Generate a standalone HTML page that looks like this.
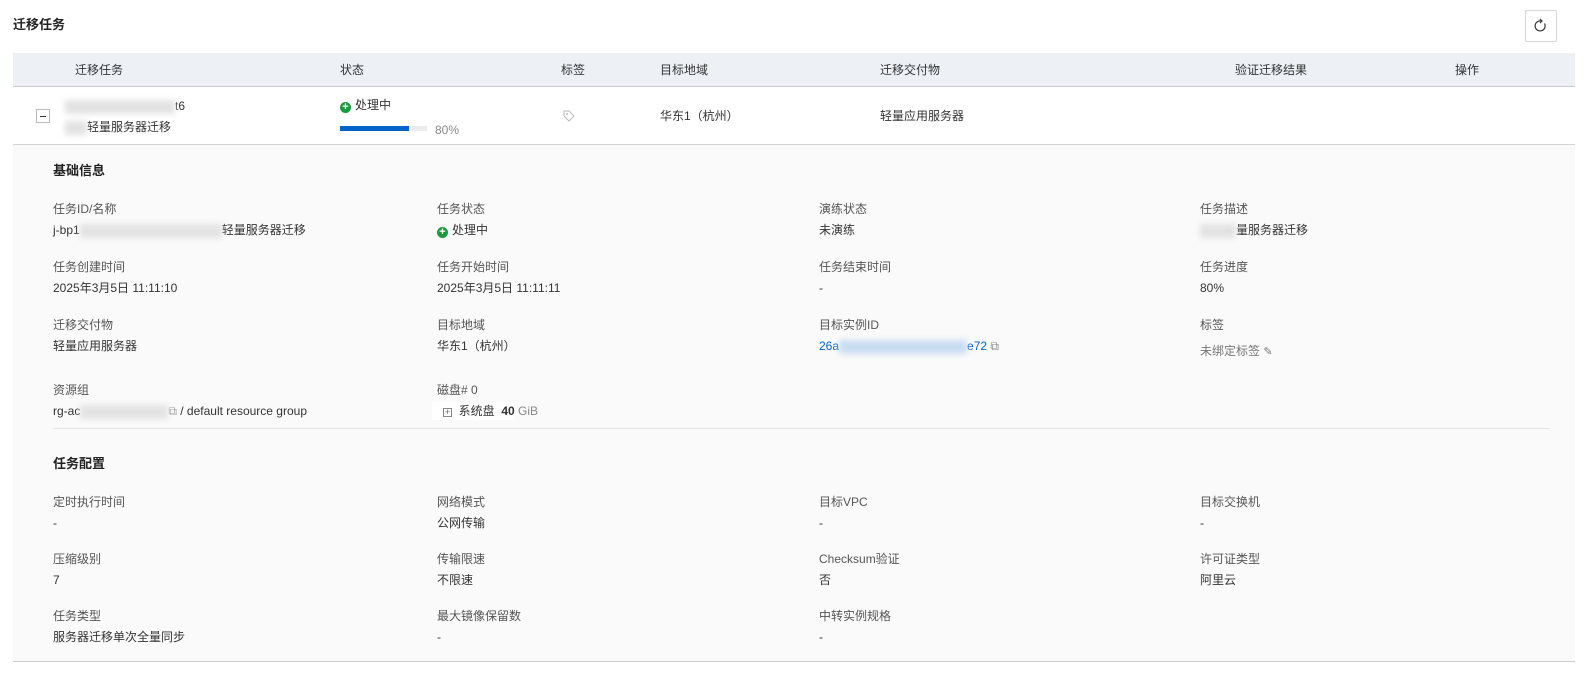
<!DOCTYPE html>
<html><head><meta charset="utf-8"><style>
*{margin:0;padding:0;box-sizing:border-box}
body{width:1587px;height:673px;background:#fff;font-family:"Liberation Sans","Noto Sans CJK SC",sans-serif;font-size:12px;color:#333;position:relative;overflow:hidden}
.a{position:absolute;white-space:nowrap;line-height:16px}
.l{color:#555}
.v{color:#333}
.blur{display:inline-block;background:#e2e2e2;filter:blur(3px);vertical-align:middle;height:14px}
.bblur{display:inline-block;background:#c9ddf2;filter:blur(3px);vertical-align:middle;height:14px}
.h{font-weight:bold;font-size:13px;color:#222}
.dot{display:inline-block;width:11px;height:11px;border-radius:50%;background:#1a9a3c;color:#fff;font-size:11px;line-height:11px;text-align:center;font-weight:bold;vertical-align:-1px;margin-right:4px}
</style></head><body>
<div class="a h" style="left:13px;top:17px;font-size:13px">迁移任务</div>
<div class="a" style="left:1525px;top:10px;width:32px;height:32px;border:1px solid #d5d5d5;border-radius:2px;background:#fff">
<svg width="30" height="30" viewBox="0 0 30 30"><path d="M18.5 12.5 A5 5 0 1 1 15 10" fill="none" stroke="#333" stroke-width="1.2"/><path d="M14 8 L16 10 L14 12" fill="none" stroke="#333" stroke-width="1.2"/></svg></div>
<div class="a" style="left:13px;top:53px;width:1562px;height:34px;background:#edf1f6;border-bottom:1px solid #ccc"></div>
<div class="a" style="left:75px;top:62px">迁移任务</div>
<div class="a" style="left:340px;top:62px">状态</div>
<div class="a" style="left:561px;top:62px">标签</div>
<div class="a" style="left:660px;top:62px">目标地域</div>
<div class="a" style="left:880px;top:62px">迁移交付物</div>
<div class="a" style="left:1235px;top:62px">验证迁移结果</div>
<div class="a" style="left:1455px;top:62px">操作</div>
<!-- row -->
<div class="a" style="left:36px;top:109px;width:14px;height:14px;border:1px solid #bbb;background:#fff"><div style="position:absolute;left:3px;top:6px;width:6px;height:1px;background:#333"></div></div>
<div class="a" style="left:65px;top:98px"><span class="blur" style="width:110px"></span>t6</div>
<div class="a" style="left:65px;top:119px"><span class="blur" style="width:22px"></span>轻量服务器迁移</div>
<div class="a" style="left:340px;top:97px"><span class="dot">+</span>处理中</div>
<div class="a" style="left:340px;top:126px;width:87px;height:5px;background:#ececec"><div style="width:69px;height:5px;background:#0064c8"></div></div>
<div class="a" style="left:435px;top:122px;color:#888">80%</div>
<svg class="a" style="left:562px;top:109px" width="14" height="14" viewBox="0 0 14 14"><path d="M2 2 H7 L12 7 L7 12 L2 7 Z" fill="none" stroke="#bbb"/><circle cx="5" cy="5" r="1" fill="#bbb"/></svg>
<div class="a" style="left:660px;top:108px">华东1（杭州）</div>
<div class="a" style="left:880px;top:108px">轻量应用服务器</div>
<div class="a" style="left:13px;top:144px;width:1562px;height:518px;background:#fafafa;border-top:1px solid #d5d5d5;border-bottom:1px solid #ccc"></div>
<div class="a h" style="left:53px;top:163px">基础信息</div>
<div class="a l" style="left:53px;top:201px">任务ID/名称</div>
<div class="a v" style="left:53px;top:222px">j-bp1<span class="blur" style="width:142px"></span>轻量服务器迁移</div>
<div class="a l" style="left:437px;top:201px">任务状态</div>
<div class="a v" style="left:437px;top:222px"><span class="dot">+</span>处理中</div>
<div class="a l" style="left:819px;top:201px">演练状态</div>
<div class="a v" style="left:819px;top:222px">未演练</div>
<div class="a l" style="left:1200px;top:201px">任务描述</div>
<div class="a v" style="left:1200px;top:222px"><span class="blur" style="width:36px"></span>量服务器迁移</div>
<div class="a l" style="left:53px;top:259px">任务创建时间</div>
<div class="a v" style="left:53px;top:280px">2025年3月5日 11:11:10</div>
<div class="a l" style="left:437px;top:259px">任务开始时间</div>
<div class="a v" style="left:437px;top:280px">2025年3月5日 11:11:11</div>
<div class="a l" style="left:819px;top:259px">任务结束时间</div>
<div class="a v" style="left:819px;top:280px">-</div>
<div class="a l" style="left:1200px;top:259px">任务进度</div>
<div class="a v" style="left:1200px;top:280px">80%</div>
<div class="a l" style="left:53px;top:317px">迁移交付物</div>
<div class="a v" style="left:53px;top:338px">轻量应用服务器</div>
<div class="a l" style="left:437px;top:317px">目标地域</div>
<div class="a v" style="left:437px;top:338px">华东1（杭州）</div>
<div class="a l" style="left:819px;top:317px">目标实例ID</div>
<div class="a" style="left:819px;top:338px;color:#0064c8">26a<span class="bblur" style="width:128px"></span>e72 <span style="color:#888">⧉</span></div>
<div class="a l" style="left:1200px;top:317px">标签</div>
<div class="a" style="left:1200px;top:343px;color:#777">未绑定标签 <span style="font-size:11px">✎</span></div>
<div class="a l" style="left:53px;top:382px">资源组</div>
<div class="a v" style="left:53px;top:403px">rg-ac<span class="blur" style="width:88px"></span><span style="color:#999">⧉</span> / default resource group</div>
<div class="a l" style="left:437px;top:382px">磁盘# 0</div>
<div class="a" style="left:432px;top:402px;width:82px;height:18px;background:#fff"></div>
<div class="a v" style="left:443px;top:403px"><span style="display:inline-block;width:9px;height:9px;border:1px solid #888;font-size:9px;line-height:7px;text-align:center;color:#666;vertical-align:0">+</span>&nbsp; 系统盘 &nbsp;<b>40</b> <span style="color:#888">GiB</span></div>
<div class="a" style="left:53px;top:428px;width:1497px;height:1px;background:#e5e5e5"></div>
<div class="a h" style="left:53px;top:456px">任务配置</div>
<div class="a l" style="left:53px;top:494px">定时执行时间</div>
<div class="a v" style="left:53px;top:515px">-</div>
<div class="a l" style="left:437px;top:494px">网络模式</div>
<div class="a v" style="left:437px;top:515px">公网传输</div>
<div class="a l" style="left:819px;top:494px">目标VPC</div>
<div class="a v" style="left:819px;top:515px">-</div>
<div class="a l" style="left:1200px;top:494px">目标交换机</div>
<div class="a v" style="left:1200px;top:515px">-</div>
<div class="a l" style="left:53px;top:551px">压缩级别</div>
<div class="a v" style="left:53px;top:572px">7</div>
<div class="a l" style="left:437px;top:551px">传输限速</div>
<div class="a v" style="left:437px;top:572px">不限速</div>
<div class="a l" style="left:819px;top:551px">Checksum验证</div>
<div class="a v" style="left:819px;top:572px">否</div>
<div class="a l" style="left:1200px;top:551px">许可证类型</div>
<div class="a v" style="left:1200px;top:572px">阿里云</div>
<div class="a l" style="left:53px;top:608px">任务类型</div>
<div class="a v" style="left:53px;top:629px">服务器迁移单次全量同步</div>
<div class="a l" style="left:437px;top:608px">最大镜像保留数</div>
<div class="a v" style="left:437px;top:629px">-</div>
<div class="a l" style="left:819px;top:608px">中转实例规格</div>
<div class="a v" style="left:819px;top:629px">-</div>
</body></html>
